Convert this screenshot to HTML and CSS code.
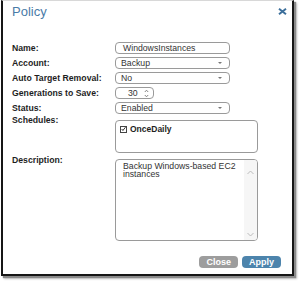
FILE: index.html
```html
<!DOCTYPE html>
<html lang="en">
<head>
    <meta charset="UTF-8">
    <title>Policy</title>
    <link rel="stylesheet" href="styles.css">
</head>
<body>
    <div class="dialog">
        <div class="dialog-header">
            <h2 class="dialog-title">Policy</h2>
            <span class="dialog-close">
                <svg width="9" height="7" viewBox="0 0 9 7"><path d="M1 0.8 L8 6.2 M8 0.8 L1 6.2" stroke="#3c6f9b" stroke-width="2" fill="none"/></svg>
            </span>
        </div>

        <div class="policy-form">
            <label class="field-label">Name:</label>
            <div class="field text-field name-field">WindowsInstances</div>

            <label class="field-label">Account:</label>
            <div class="field select-field">Backup</div>

            <label class="field-label">Auto Target Removal:</label>
            <div class="field select-field">No</div>

            <label class="field-label">Generations to Save:</label>
            <div class="field spin-field">
                <span>30</span>
                <svg class="spin-arrows" width="5" height="9" viewBox="0 0 5 9"><path d="M0.8 3 L2.5 1.2 L4.2 3 M0.8 6 L2.5 7.8 L4.2 6" stroke="#777" stroke-width="0.9" fill="none"/></svg>
            </div>

            <label class="field-label">Status:</label>
            <div class="field select-field">Enabled</div>

            <label class="field-label top-label">Schedules:</label>
            <div class="list-box">
                <div class="check-row">
                    <span class="check-box">
                        <svg width="6" height="6" viewBox="0 0 6 6"><path d="M0.8 3 L2.3 4.8 L5.4 0.8" stroke="#222" stroke-width="1.1" fill="none"/></svg>
                    </span>
                    <span>OnceDaily</span>
                </div>
            </div>

            <label class="field-label top-label desc-label">Description:</label>
            <div class="text-area">
                <div class="text-area-content">Backup Windows-based EC2 instances</div>
                <div class="scroll-bar">
                    <svg width="7" height="5" viewBox="0 0 7 5"><path d="M0.5 4 L3.5 1 L6.5 4" stroke="#b5b5b5" stroke-width="0.9" fill="none"/></svg>
                    <svg width="7" height="5" viewBox="0 0 7 5"><path d="M0.5 1 L3.5 4 L6.5 1" stroke="#b5b5b5" stroke-width="0.9" fill="none"/></svg>
                </div>
            </div>
        </div>

        <div class="dialog-footer">
            <button class="btn btn-close">Close</button>
            <button class="btn btn-apply">Apply</button>
        </div>
    </div>
</body>
</html>
```

FILE: styles.css
```css
:root {
    --title: #4a7ba7;
    --label: #1e1e1e;
    --text: #333;
    --border: #9a9a9a;
}

* {
    box-sizing: border-box;
    margin: 0;
    padding: 0;
}

body {
    font-family: 'Liberation Sans', Arial, sans-serif;
    background: #fff;
    width: 300px;
    height: 282px;
    overflow: hidden;
}

.dialog {
    margin-left: 1px;
    width: 293px;
    height: 276px;
    background: #fff;
    border: 2px solid #161616;
    border-top: 1px solid #d8d8d8;
    box-shadow: 2px 2px 1px #8a8a8a, 3px 3px 2px #c4c4c4;
    display: flex;
    flex-direction: column;
}

.dialog-header {
    height: 41px;
    display: flex;
    justify-content: space-between;
    align-items: flex-start;
    padding: 2px 5px 0 9px;
}

.dialog-title {
    font-size: 13px;
    font-weight: 400;
    line-height: 18px;
    color: var(--title);
}

.dialog-close {
    display: flex;
    margin-top: 5px;
}

.policy-form {
    display: grid;
    grid-template-columns: 103px 143px;
    row-gap: 3px;
    padding-left: 9px;
}

.field-label {
    font-size: 8.7px;
    font-weight: 700;
    color: var(--label);
    align-self: center;
    line-height: 10px;
}

.top-label {
    align-self: start;
    margin-top: -2px;
}

.desc-label {
    margin-top: -1px;
}

.field {
    height: 12px;
    border: 1px solid var(--border);
    border-radius: 4px;
    font-size: 8.7px;
    color: var(--text);
    line-height: 10px;
    padding: 0 5px;
    width: 115px;
    position: relative;
}

.name-field {
    padding-left: 7px;
}

.select-field::after {
    content: '';
    position: absolute;
    right: 7px;
    top: 4px;
    border-left: 2.5px solid transparent;
    border-right: 2.5px solid transparent;
    border-top: 2.5px solid #777;
}

.spin-field {
    width: 39px;
    display: flex;
    align-items: center;
    justify-content: space-between;
    padding: 0 4px 0 12px;
}

.list-box {
    margin-top: 3px;
    height: 33px;
    border: 1px solid var(--border);
    border-radius: 4px;
    padding: 3px 4px;
}

.check-row {
    display: flex;
    align-items: center;
    gap: 3px;
    font-size: 8.5px;
    font-weight: 700;
    color: var(--label);
    line-height: 10px;
}

.check-box {
    width: 7px;
    height: 7px;
    border: 1px solid #444;
    display: flex;
    align-items: center;
    justify-content: center;
}

.text-area {
    margin-top: 3px;
    height: 82px;
    border: 1px solid var(--border);
    border-radius: 4px;
    display: flex;
    overflow: hidden;
}

.text-area-content {
    flex: 1;
    font-size: 8.7px;
    line-height: 7.5px;
    color: var(--text);
    padding: 3px 6px 0 7px;
}

.scroll-bar {
    width: 13px;
    background: #f6f6f6;
    display: flex;
    flex-direction: column;
    justify-content: space-between;
    align-items: center;
    padding: 10px 0 3px;
}

.dialog-footer {
    display: flex;
    justify-content: flex-end;
    gap: 4px;
    padding: 15px 11px 0 0;
}

.btn {
    height: 12px;
    border: none;
    border-radius: 4px;
    padding: 0 7px;
    font-family: inherit;
    font-size: 9px;
    font-weight: 700;
    color: #fff;
    line-height: 12px;
}

.btn-close {
    background: #9d9d9d;
}

.btn-apply {
    background: #4d84ac;
}
```
